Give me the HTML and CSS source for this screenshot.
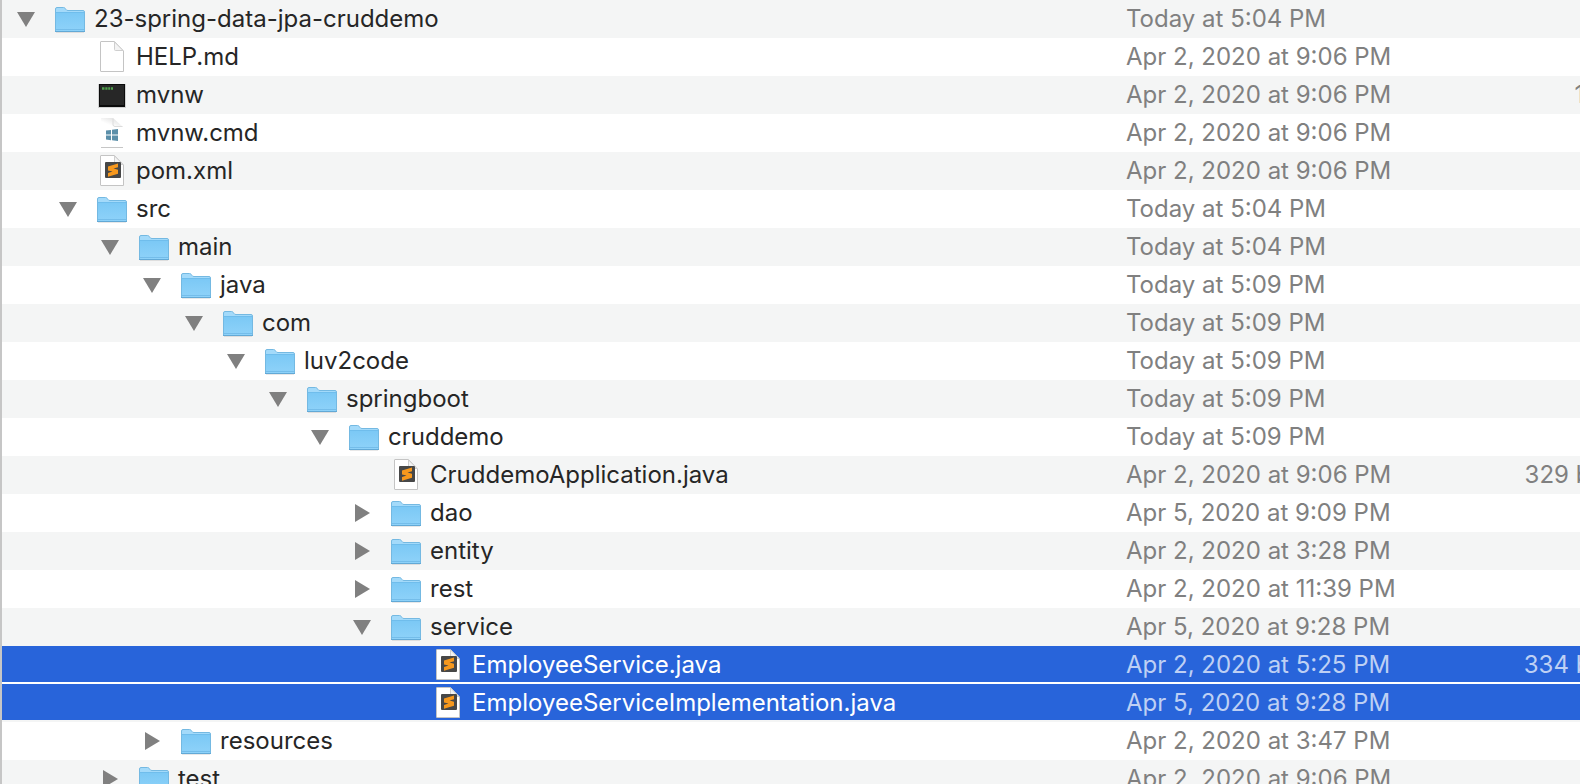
FILE: index.html
```html
<!DOCTYPE html>
<html lang="en">
<head>
<meta charset="utf-8">
<title>23-spring-data-jpa-cruddemo</title>
<link rel="stylesheet" href="styles.css">
</head>
<body>
<svg class="defs" aria-hidden="true">
  <defs>
    <linearGradient id="blue" x1="0" y1="0" x2="0" y2="1">
      <stop offset="0" stop-color="#7bc8f5"/><stop offset="1" stop-color="#8ed2f9"/>
    </linearGradient>
    <linearGradient id="curl" x1="0" y1="1" x2="1" y2="0">
      <stop offset=".3" stop-color="#fff"/><stop offset="1" stop-color="#d8d8d8"/>
    </linearGradient>
    <symbol id="folder" viewBox="0 0 32 32">
      <path d="M2 29H30" stroke="#000" stroke-opacity=".18"/>
      <path d="M1.500 6Q1.500 4.500 3 4.500H9.500Q10.500 4.500 11 5.200L12 6.500Q12.500 7.500 14 7.500H29Q30.500 7.500 30.500 9V28.500H1.500Z" fill="#a3dafa" stroke="#74b9e2"/>
      <path d="M2 9.500H30V28H2Z" fill="url(#blue)"/>
      <path d="M2 9.500H30" stroke="#6fbdec"/>
      <path d="M2 26.500H30" stroke="#74bdea"/>
      <path d="M1 28.500H31" stroke="#62a9d6"/>
    </symbol>
    <symbol id="page" viewBox="0 0 32 32">
      <path class="sheet" d="M5 .5H18.500L27.500 10V30.500H5Q4.500 30.500 4.500 30V1Q4.500 .5 5 .5Z"/>
      <path class="fold" d="M18.500 1V8.500Q18.500 9.500 19.500 9.500H27Z"/>
    </symbol>
    <symbol id="sublime" viewBox="0 0 32 32">
      <use href="#page"/>
      <rect x="9" y="7" width="16" height="16" rx="1" fill="#474747"/>
      <path d="M22 8.500L12 11.500V15.500L16.500 16.500L12 18V21.700L22 18.700V14.700L17.500 13.600L22 12.200Z" fill="#f7981d"/>
    </symbol>
    <symbol id="windows" viewBox="0 0 32 32">
      <path d="M5 1H17L27 10H5Z" fill="url(#curl)"/>
      <path d="M17 1.500V8Q17.500 9.500 19 9.500H26.500" fill="none" stroke="#dcdcdc"/>
      <path d="M5 30.500H27" stroke="#c6c6c6"/>
      <path d="M10 13.500L15 12.900V17.500H10ZM16 12.800L22 12V17.500H16ZM10 18.500H15V23.200L10 22.500ZM16 18.500H22V24L16 23.300Z" fill="#5b8fa9"/>
    </symbol>
    <symbol id="exec" viewBox="0 0 32 32">
      <rect x="2" y="5" width="28" height="24" fill="#000" opacity=".14"/>
      <rect x="3" y="5" width="26" height="23" fill="#0b0b0b"/>
      <rect x="4" y="6" width="24" height="20" fill="#272727"/>
      <path d="M6 9.500H8.500M9.300 9.500H11.500M12.200 9.500H14.200M15 9.500H17" stroke="#4fa04c" stroke-width="2.600"/>
    </symbol>
    <symbol id="open" viewBox="0 0 20 20"><path d="M1 3H19L10 18Z" fill="#808080"/></symbol>
    <symbol id="closed" viewBox="0 0 20 20"><path d="M3 1V19L18 10Z" fill="#808080"/></symbol>
  </defs>
</svg>
<main class="browser">
  <table class="files" aria-label="Files">
    <colgroup><col class="col-name"><col class="col-date"><col class="col-size"></colgroup>
    <tbody id="rows"></tbody>
  </table>
</main>
<script src="files.js"></script>
</body>
</html>
```
FILE: styles.css
```css
* { box-sizing: border-box; }

body {
  margin: 0;
  background: #fff;
  color: #262626;
  font: 24px/38px Inter, "Liberation Sans", sans-serif;
}

.defs { position: absolute; width: 0; height: 0; }

.browser {
  height: 100vh;
  overflow: hidden;
  border-left: 2px solid #c6c6c6;
}

.files {
  width: calc(100% + 58px);
  table-layout: fixed;
  border-collapse: collapse;
}

.col-date { width: 360px; }
.col-size { width: 152px; }

.row {
  --stripe: #fff;
  height: 38px;
  background: var(--stripe);
}

.row:nth-child(odd) { --stripe: #f4f5f5; }

td {
  padding: 0;
  white-space: nowrap;
}

.date, .size { color: #808080; }
.size { text-align: right; }

.entry {
  display: flex;
  align-items: center;
  height: 38px;
  padding-left: calc(14px + 42px * var(--level));
}

.toggle {
  width: 20px;
  height: 20px;
  margin-right: 18px;
  padding: 0;
  border: 0;
  background: none;
}

.toggle svg { display: block; width: 20px; height: 20px; }

.icon {
  width: 32px;
  height: 32px;
  margin-right: 8px;
}

.sheet { fill: #fff; stroke: #c4c4c4; }
.fold { fill: #f3f3f3; stroke: #cfcfcf; }

.selected {
  background: linear-gradient(#2864da 36px, var(--stripe) 36px);
  color: #fff;
}

.selected .date, .selected .size { color: #bed0f4; }
```
FILE: files.js
```javascript
const files = [
  [0, "open", "folder", "23-spring-data-jpa-cruddemo", "Today at 5:04 PM"],
  [1, "", "page", "HELP.md", "Apr 2, 2020 at 9:06 PM"],
  [1, "", "exec", "mvnw", "Apr 2, 2020 at 9:06 PM", "10 KB"],
  [1, "", "windows", "mvnw.cmd", "Apr 2, 2020 at 9:06 PM"],
  [1, "", "sublime", "pom.xml", "Apr 2, 2020 at 9:06 PM"],
  [1, "open", "folder", "src", "Today at 5:04 PM"],
  [2, "open", "folder", "main", "Today at 5:04 PM"],
  [3, "open", "folder", "java", "Today at 5:09 PM"],
  [4, "open", "folder", "com", "Today at 5:09 PM"],
  [5, "open", "folder", "luv2code", "Today at 5:09 PM"],
  [6, "open", "folder", "springboot", "Today at 5:09 PM"],
  [7, "open", "folder", "cruddemo", "Today at 5:09 PM"],
  [8, "", "sublime", "CruddemoApplication.java", "Apr 2, 2020 at 9:06 PM", "329 bytes"],
  [8, "closed", "folder", "dao", "Apr 5, 2020 at 9:09 PM"],
  [8, "closed", "folder", "entity", "Apr 2, 2020 at 3:28 PM"],
  [8, "closed", "folder", "rest", "Apr 2, 2020 at 11:39 PM"],
  [8, "open", "folder", "service", "Apr 5, 2020 at 9:28 PM"],
  [9, "", "sublime", "EmployeeService.java", "Apr 2, 2020 at 5:25 PM", "334 bytes", true],
  [9, "", "sublime", "EmployeeServiceImplementation.java", "Apr 5, 2020 at 9:28 PM", "", true],
  [3, "closed", "folder", "resources", "Apr 2, 2020 at 3:47 PM"],
  [2, "closed", "folder", "test", "Apr 2, 2020 at 9:06 PM"],
];

const use = (id) => `<use href="#${id}"/>`;

document.getElementById("rows").innerHTML = files.map(([level, state, icon, name, date, size = "", selected]) => {
  const toggle = state
    ? `<button class="toggle" type="button" aria-label="Toggle ${name}" aria-expanded="${state === "open"}"><svg>${use(state)}</svg></button>`
    : `<span class="toggle"></span>`;
  return `<tr class="row${selected ? " selected" : ""}">
    <td><div class="entry" style="--level:${level}">${toggle}<svg class="icon" aria-hidden="true">${use(icon)}</svg><span class="name">${name}</span></div></td>
    <td class="date">${date}</td>
    <td class="size">${size}</td>
  </tr>`;
}).join("");
```
